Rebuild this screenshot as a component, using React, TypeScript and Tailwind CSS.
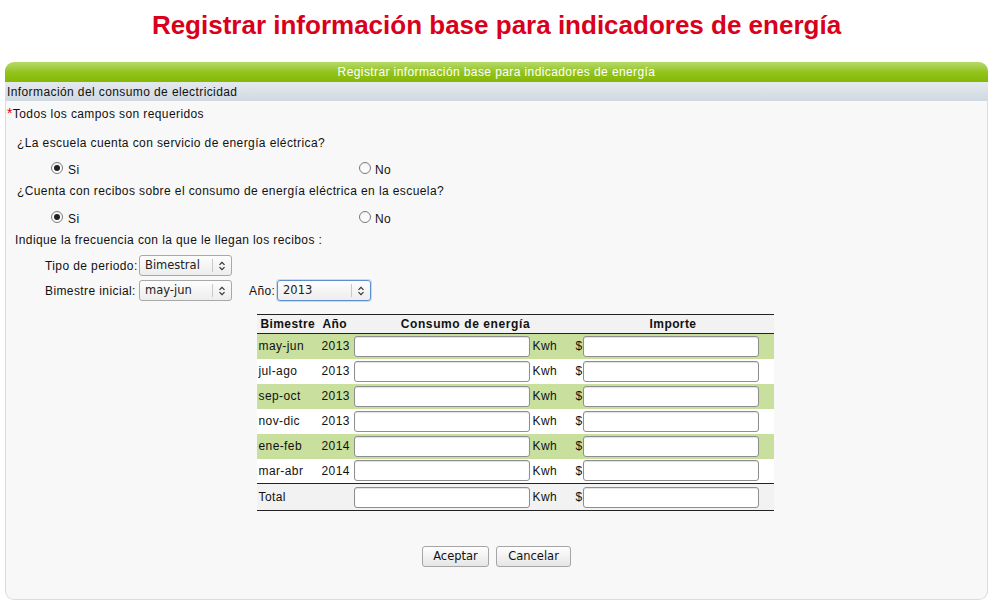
import React from "react";

const F = { fontFamily: '"Liberation Sans", Arial, sans-serif' };
const D = { fontFamily: '"DejaVu Sans", Verdana, sans-serif' };

function Radio({ checked }: { checked?: boolean }) {
  return (
    <span className="inline-flex w-[12px] h-[12px] rounded-full border border-[#7a7a7a] bg-gradient-to-b from-[#f4f4f4] to-white items-center justify-center">
      {checked && <span className="w-[6px] h-[6px] rounded-full bg-[#222]" />}
    </span>
  );
}

function Arrows() {
  return (
    <svg width="8" height="10" viewBox="0 0 8 10" fill="none" stroke="#333" strokeWidth="1.2">
      <path d="M1.5 3.8 L4 1.3 L6.5 3.8" />
      <path d="M1.5 6.2 L4 8.7 L6.5 6.2" />
    </svg>
  );
}

function Select({ value, w, focus }: { value: string; w: string; focus?: boolean }) {
  return (
    <span
      className={`inline-flex h-[21px] items-center rounded-[3px] border bg-gradient-to-b from-[#fdfdfd] to-[#ededed] tracking-normal ${w} ${
        focus ? "border-[#5b8fd0] shadow-[0_0_0_1px_rgba(120,160,220,0.35)]" : "border-[#a8a8a8]"
      }`}
      style={D}
    >
      <span className="flex-1 pl-[5px] text-[11.5px] text-[#222]">{value}</span>
      <span className="h-[13px] w-px bg-[#c8c8c8]" />
      <span className="w-[18px] flex items-center justify-center">
        <Arrows />
      </span>
    </span>
  );
}

function TInput() {
  return (
    <span className="block w-[176px] h-[21px] rounded-[3px] border border-[#8e8e8e] bg-white shadow-[inset_0_1px_1px_rgba(0,0,0,0.12)]" />
  );
}

const rows = [
  ["may-jun", "2013", true],
  ["jul-ago", "2013", false],
  ["sep-oct", "2013", true],
  ["nov-dic", "2013", false],
  ["ene-feb", "2014", true],
  ["mar-abr", "2014", false],
] as const;

function Cells() {
  return (
    <>
      <td className="p-0 pl-[1px]"><TInput /></td>
      <td className="p-0 pl-[1px]">Kwh</td>
      <td className="p-0 pl-[2px]">$</td>
      <td className="p-0"><TInput /></td>
      <td className="p-0" />
    </>
  );
}

export default function App() {
  return (
    <div className="w-[1000px] h-[609px] bg-white text-[12px] text-[#111] tracking-[0.4px]" style={F}>
      <div className="w-[993px] h-[62px] flex justify-center pt-[9px]">
        <h1 className="text-[26px] leading-[32px] font-bold text-[#d9001b] tracking-normal">
          Registrar información base para indicadores de energía
        </h1>
      </div>

      <div className="ml-[5px] w-[983px] h-[538px] flex flex-col">
        <div className="h-[20px] rounded-t-[9px] bg-gradient-to-b from-[#b6da66] via-[#93c41c] to-[#84b800] flex items-center justify-center text-white">
          Registrar información base para indicadores de energía
        </div>
        <div className="h-[19px] bg-gradient-to-b from-[#e4e9ee] to-[#d0d9e1] flex items-center pl-[2px]">
          Información del consumo de electricidad
        </div>
        <div className="flex-1 bg-[#f8f8f8] border border-t-0 border-[#dcdcdc] rounded-b-[9px] flex flex-col">
          <div className="mt-[1px] h-[24px] flex items-center pl-[1px]">
            <span className="text-[#e00000] text-[14px] leading-none self-start mt-[4px]">*</span>
            <span>Todos los campos son requeridos</span>
          </div>
          <div className="mt-[5px] h-[24px] flex items-center pl-[11px]">
            ¿La escuela cuenta con servicio de energía eléctrica?
          </div>
          <div className="h-[26px] flex items-center">
            <div className="w-[353px] pl-[45px] flex items-center gap-[5px]">
              <Radio checked />
              <span className="mt-[4px]">Si</span>
            </div>
            <div className="flex items-center gap-[4px]">
              <Radio />
              <span className="mt-[4px]">No</span>
            </div>
          </div>
          <div className="h-[20px] flex items-center pl-[11px]">
            ¿Cuenta con recibos sobre el consumo de energía eléctrica en la escuela?
          </div>
          <div className="h-[32px] flex items-center">
            <div className="w-[353px] pl-[45px] flex items-center gap-[5px]">
              <Radio checked />
              <span className="mt-[4px]">Si</span>
            </div>
            <div className="flex items-center gap-[4px]">
              <Radio />
              <span className="mt-[4px]">No</span>
            </div>
          </div>
          <div className="h-[14px] flex items-center pl-[9px]">
            Indique la frecuencia con la que le llegan los recibos :
          </div>
          <div className="mt-[8px] h-[21px] flex items-center pl-[39px]">
            <span className="w-[94px] whitespace-nowrap">Tipo de periodo:</span>
            <Select value="Bimestral" w="w-[93px]" />
          </div>
          <div className="mt-[4px] h-[21px] flex items-center pl-[39px]">
            <span className="w-[94px] whitespace-nowrap">Bimestre inicial:</span>
            <Select value="may-jun" w="w-[93px]" />
            <span className="ml-[17px] w-[28px]">Año:</span>
            <Select value="2013" w="w-[94px]" focus />
          </div>

          <div className="mt-[13px] flex justify-center pl-[38px]">
            <table className="w-[516px] border-collapse table-fixed">
              <colgroup>
                <col className="w-[61px]" />
                <col className="w-[35px]" />
                <col className="w-[178px]" />
                <col className="w-[42px]" />
                <col className="w-[9px]" />
                <col className="w-[177px]" />
                <col className="w-[14px]" />
              </colgroup>
              <thead>
                <tr className="h-[17px] bg-[#f2f2f2] border-t border-b border-[#222]">
                  <th className="text-left pl-[3px] font-bold p-0">Bimestre</th>
                  <th className="text-left pl-[4px] font-bold p-0">Año</th>
                  <th colSpan={3} className="text-center font-bold p-0 pr-[5px] tracking-[0.6px]">Consumo de energía</th>
                  <th colSpan={2} className="text-center font-bold p-0 pr-[10px]">Importe</th>
                </tr>
              </thead>
              <tbody>
                {rows.map(([b, y, g]) => (
                  <tr key={b} className={`h-[25px] ${g ? "bg-[#c8df9e]" : "bg-white"}`}>
                    <td className="pl-[1px] p-0">{b}</td>
                    <td className="pl-[3px] p-0">{y}</td>
                    <Cells />
                  </tr>
                ))}
                <tr className="h-[27px] bg-[#f2f2f2] border-t border-b border-[#222]">
                  <td className="pl-[1px] p-0">Total</td>
                  <td className="p-0" />
                  <Cells />
                </tr>
              </tbody>
            </table>
          </div>

          <div className="mt-[35px] flex justify-center gap-[7px] tracking-normal" style={D}>
            <button className="h-[21px] w-[67px] rounded-[3px] border border-[#a5a5a5] bg-gradient-to-b from-[#fefefe] to-[#e6e6e6] text-[11.5px] text-[#111]">
              Aceptar
            </button>
            <button className="h-[21px] w-[75px] rounded-[3px] border border-[#a5a5a5] bg-gradient-to-b from-[#fefefe] to-[#e6e6e6] text-[11.5px] text-[#111]">
              Cancelar
            </button>
          </div>
        </div>
      </div>
    </div>
  );
}
